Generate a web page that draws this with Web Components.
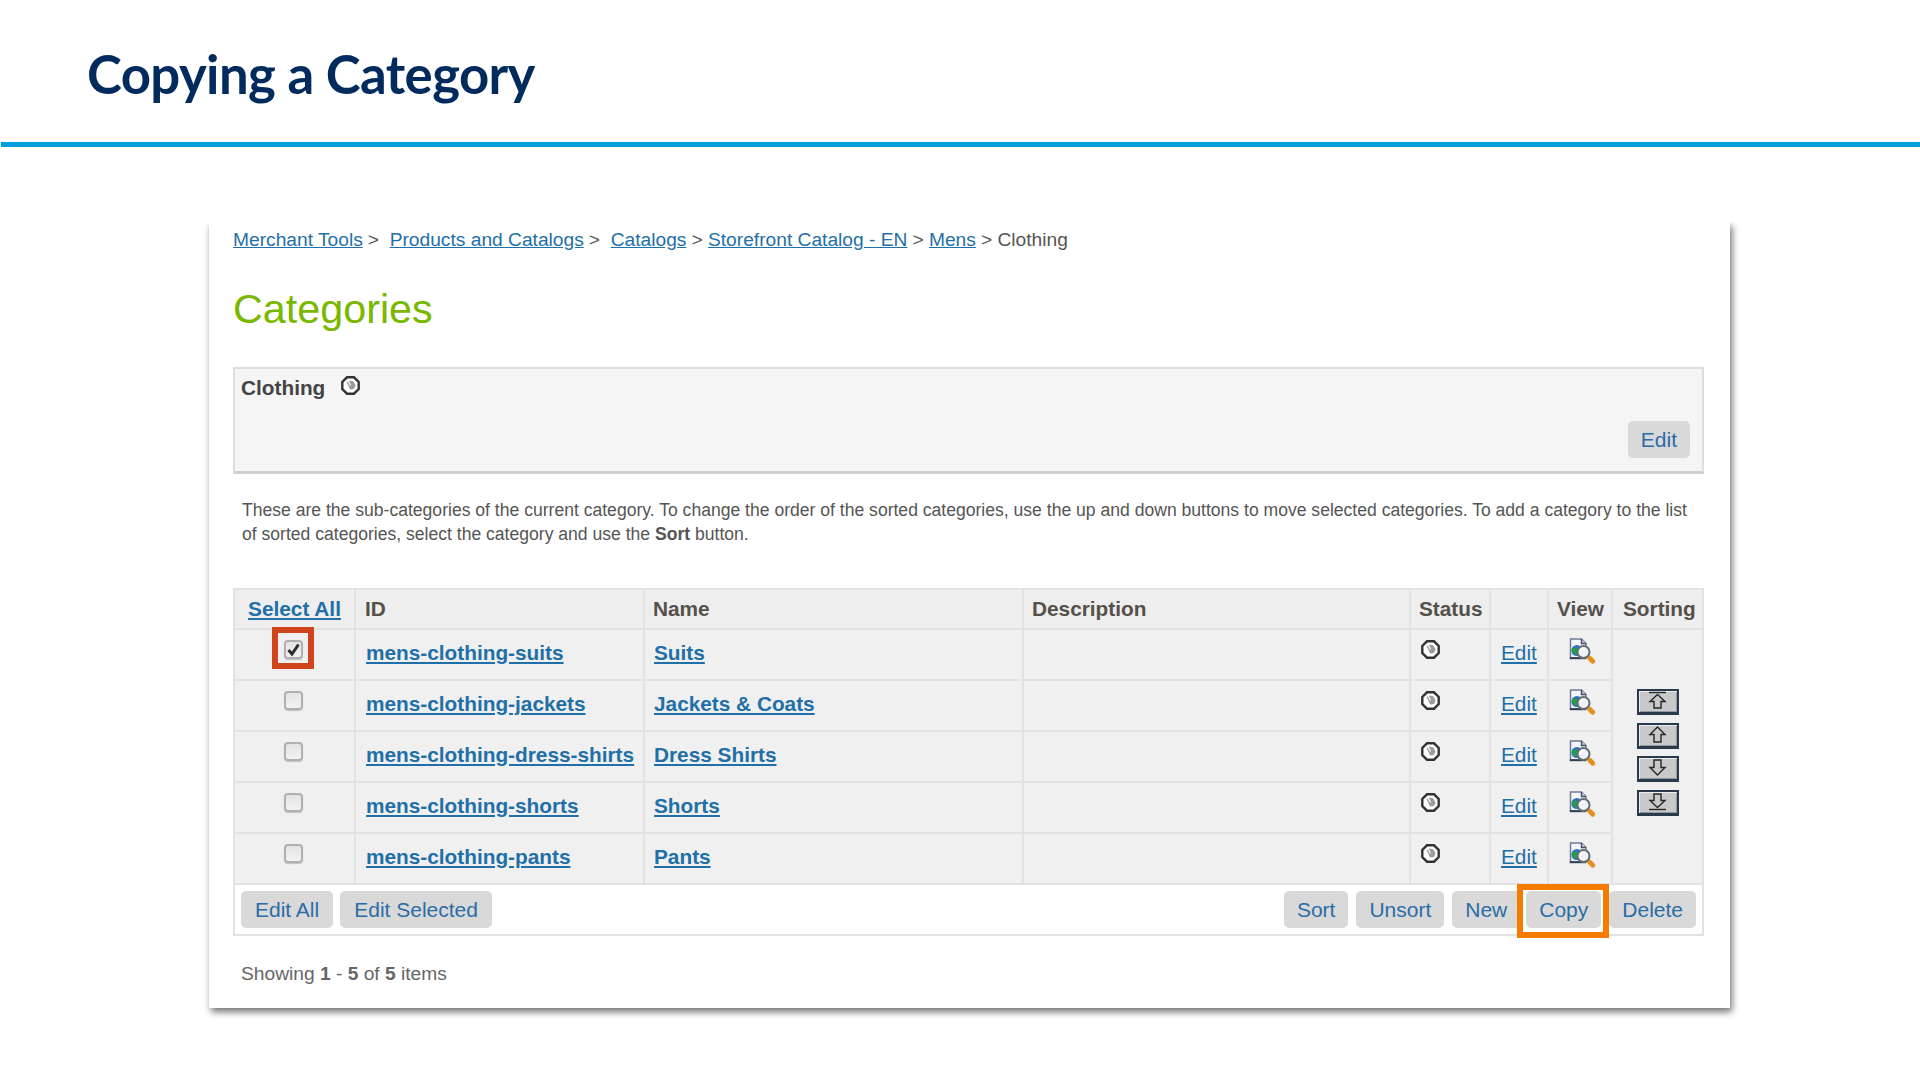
<!DOCTYPE html>
<html lang="en">
<head>
<meta charset="utf-8">
<title>Copying a Category</title>
<style>
    html, body { margin: 0; padding: 0; background: #fff; }
    body { width: 1920px; height: 1080px; overflow: hidden; font-family: "Liberation Sans", Arial, sans-serif; }
</style>
</head>
<body>
<slide-header>Copying a Category</slide-header>
<screen-card>
    <bread-crumbs>
        <a href="#">Merchant Tools</a><i>&gt;&nbsp;</i>
        <a href="#">Products and Catalogs</a><i>&gt;&nbsp;</i>
        <a href="#">Catalogs</a><i>&gt;</i>
        <a href="#">Storefront Catalog - EN</a><i>&gt;</i>
        <a href="#">Mens</a><i>&gt;</i>
        <span>Clothing</span>
    </bread-crumbs>
    <page-heading>Categories</page-heading>
    <category-box title="Clothing"></category-box>
    <help-text><span>These are the sub-categories of the current category. To change the order of the sorted categories, use the up and down buttons to move selected categories. To add a category to the list</span><br><span>of sorted categories, select the category and use the</span> <b>Sort</b> <span>button.</span></help-text>
    <category-table items='[
        {"id":"mens-clothing-suits","name":"Suits","checked":true},
        {"id":"mens-clothing-jackets","name":"Jackets &amp; Coats"},
        {"id":"mens-clothing-dress-shirts","name":"Dress Shirts"},
        {"id":"mens-clothing-shorts","name":"Shorts"},
        {"id":"mens-clothing-pants","name":"Pants"}
    ]'></category-table>
    <paging-info>Showing <b>1</b> - <b>5</b> of <b>5</b> items</paging-info>
</screen-card>

<script>
class SlideHeader extends HTMLElement {
    constructor() {
        super();
        this.attachShadow({ mode: 'open' });
        this.shadowRoot.innerHTML = `
            <style>
                :host {
                    display: flex;
                    align-items: center;
                    box-sizing: border-box;
                    height: 147px;
                    margin-left: 1px;
                    padding: 6px 0 0 86px;
                    border-bottom: 5px solid #00a0df;
                    font: bold 52.7px/1 Lato, "Open Sans", sans-serif;
                    color: #002b5c;
                    letter-spacing: -0.6px;
                }
            </style>
            <slot></slot>
        `;
    }
}

class ScreenCard extends HTMLElement {
    constructor() {
        super();
        this.attachShadow({ mode: 'open' });
        this.shadowRoot.innerHTML = `
            <style>
                :host {
                    display: block;
                    box-sizing: border-box;
                    width: 1521px;
                    height: 786px;
                    margin: 75px 0 0 209px;
                    padding: 6px 26px 0 24px;
                    background: #fff;
                    box-shadow: 2px 4px 7px rgba(0, 0, 0, .55);
                    clip-path: inset(0 -20px -20px -20px);
                    font-family: "Liberation Sans", Arial, sans-serif;
                    color: #555;
                }
            </style>
            <slot></slot>
        `;
    }
}

class BreadCrumbs extends HTMLElement {
    constructor() {
        super();
        this.attachShadow({ mode: 'open' });
        this.shadowRoot.innerHTML = `
            <style>
                :host {
                    display: block;
                    font-size: 19.2px;
                    line-height: 24px;
                    height: 24px;
                    white-space: nowrap;
                    color: #555;
                }
                ::slotted(a) { color: #1f6fa8; }
                ::slotted(i) { font-style: normal; margin-left: 5px; }
            </style>
            <slot></slot>
        `;
    }
}

class PageHeading extends HTMLElement {
    constructor() {
        super();
        this.attachShadow({ mode: 'open' });
        this.shadowRoot.innerHTML = `
            <style>
                :host {
                    display: block;
                    margin-top: 33px;
                    font-size: 41.3px;
                    line-height: 48px;
                    color: #7ab800;
                }
            </style>
            <slot></slot>
        `;
    }
}

class ActionButton extends HTMLElement {
    constructor() {
        super();
        this.attachShadow({ mode: 'open' });
        this.shadowRoot.innerHTML = `
            <style>
                :host {
                    display: inline-block;
                    box-sizing: border-box;
                    height: 37px;
                    padding: 0 13px;
                    border-radius: 5px;
                    background: #d9d9d9;
                    color: #2b6ca6;
                    font-size: 21px;
                    line-height: 37px;
                    white-space: nowrap;
                    cursor: pointer;
                }
            </style>
            <slot></slot>
        `;
    }
}

class StatusIcon extends HTMLElement {
    constructor() {
        super();
        this.attachShadow({ mode: 'open' });
        this.shadowRoot.innerHTML = `
            <style>
                :host { display: inline-block; width: 19px; height: 19px; line-height: 0; }
            </style>
            <svg width="19" height="19" viewBox="0 0 19 19">
                <polygon points="6,1.3 13,1.3 17.7,6 17.7,13 13,17.7 6,17.7 1.3,13 1.3,6" fill="#fff" stroke="#333" stroke-width="2.4"/>
                <path d="M5.5 6 9 4.5l3.5 1 2 4-1.5 3.5-4 .5-1.5-3.5z" fill="#9c9c9c"/>
                <path d="M7 4.5l2.5 5" stroke="#fff" stroke-width="1.2"/>
            </svg>
        `;
    }
}

class ViewIcon extends HTMLElement {
    constructor() {
        super();
        this.attachShadow({ mode: 'open' });
        this.shadowRoot.innerHTML = `
            <style>
                :host { display: inline-block; width: 27px; height: 27px; line-height: 0; }
            </style>
            <svg width="27" height="27" viewBox="0 0 27 27">
                <path d="M1.5 1H12.5l4.5 4.5V20H1.5z" fill="#f3f5f8" stroke="#6f7c94" stroke-width="1.5"/>
                <path d="M12.5 1v4.5H17" fill="#c9d0dc" stroke="#3f4f6a" stroke-width="1.4"/>
                <path d="M.8 20.2H17" stroke="#2d3f5a" stroke-width="2"/>
                <circle cx="8" cy="12.5" r="5.6" fill="#2f70c0"/>
                <path d="M3 10.5c2-1.8 5-1.2 5.6 1s-.5 3.200-1.100 5.300c-2.200-.2-5-3.300-4.500-6.300z" fill="#22a044"/>
                <circle cx="14.500" cy="14" r="6" fill="#eef2f6" stroke="#666c74" stroke-width="2"/>
                <path d="M11.500 13.500a3.200 3.200 0 0 1 3-2.800" stroke="#fff" stroke-width="1.600" fill="none"/>
                <path d="M18.800 18.300l1.600 1.600" stroke="#555" stroke-width="3"/>
                <path d="M20.800 20.300l2.900 2.900" stroke="#e39020" stroke-width="4.800" stroke-linecap="round"/>
            </svg>
        `;
    }
}

class SortButton extends HTMLElement {
    static get observedAttributes() {
        return ['dir'];
    }

    constructor() {
        super();
        this.attachShadow({ mode: 'open' });
    }

    connectedCallback() {
        const glyphs = {
            top: '<path d="M8 1.5H25" /><path d="M16.5 3.5 9 10.5H13v6.500h7v-6.500h4z" />',
            up: '<path d="M16.500 2 9 9.500H13v7.500h7V9.500h4z" />',
            down: '<path d="M16.500 17 9 9.500H13V2h7v7.500h4z" />',
            bottom: '<path d="M8 17.500H25" /><path d="M16.500 15.500 9 8.500H13V2h7v6.500h4z" />'
        };
        this.shadowRoot.innerHTML = `
            <style>
                :host {
                    display: block;
                    box-sizing: border-box;
                    width: 42px;
                    height: 26px;
                    border: 2px solid #2b3a4a;
                    border-bottom-width: 3px;
                    background: #c9c9c9;
                    box-shadow: inset 1px 1px 0 #e8eef4, inset -1px -1px 0 #8d99a8;
                    line-height: 0;
                }
                svg { display: block; margin: 0 0 0 2px; }
            </style>
            <svg width="32" height="20" viewBox="0 0 32 20" fill="none" stroke="#262626" stroke-width="1.400">
                ${glyphs[this.getAttribute('dir')]}
            </svg>
        `;
    }
}

class CategoryBox extends HTMLElement {
    constructor() {
        super();
        this.attachShadow({ mode: 'open' });
    }

    connectedCallback() {
        this.shadowRoot.innerHTML = `
            <style>
                :host {
                    display: flex;
                    flex-direction: column;
                    justify-content: space-between;
                    box-sizing: border-box;
                    height: 107px;
                    margin-top: 34px;
                    padding: 7px 12px 13px 6px;
                    background: #f5f5f5;
                    border: 2px solid #dedede;
                    border-bottom: 3px solid #cfcfcf;
                }
                .name {
                    display: flex;
                    align-items: flex-start;
                    gap: 16px;
                    font-size: 20.8px;
                    font-weight: bold;
                    line-height: 24px;
                    color: #444;
                }
                .actions { display: flex; justify-content: flex-end; }
            </style>
            <div class="name">${this.getAttribute('title')}<status-icon></status-icon></div>
            <div class="actions"><action-button>Edit</action-button></div>
        `;
    }
}

class HelpText extends HTMLElement {
    constructor() {
        super();
        this.attachShadow({ mode: 'open' });
        this.shadowRoot.innerHTML = `
            <style>
                :host {
                    display: block;
                    margin-top: 24px;
                    padding: 0 9px;
                    font-size: 17.57px;
                    line-height: 24px;
                    white-space: nowrap;
                    color: #555;
                }
            </style>
            <slot></slot>
        `;
    }
}

class CategoryTable extends HTMLElement {
    constructor() {
        super();
        this.attachShadow({ mode: 'open' });
    }

    connectedCallback() {
        const items = JSON.parse(this.getAttribute('items') || '[]');
        this.shadowRoot.innerHTML = `
            <style>
                :host {
                    display: block;
                    margin-top: 42px;
                    font-size: 20.8px;
                }
                table {
                    border-collapse: collapse;
                    table-layout: fixed;
                    width: 1469px;
                }
                th, td {
                    border: 2px solid #e2e2e2;
                    padding: 0 8px;
                    text-align: left;
                    background: #f0f0f0;
                }
                th {
                    height: 40px;
                    box-sizing: border-box;
                    background: #eeeeee;
                    color: #55504a;
                    font-size: 20.8px;
                }
                th.select a { color: #1f6fa8; }
                th.id-head { padding-left: 9px; }
                th.sort-head { padding: 0 0 0 10px; }
                tr.item td { height: 51px; box-sizing: border-box; padding: 0 8px 4px 8px; }
                tr.item td.id { padding-left: 10px; }
                tr.item td.name { padding-left: 9px; }
                tr.item td.edit { padding-left: 10px; }
                td a { color: #1f6fa8; }
                td a.strong { font-weight: bold; }
                td.check, td.icon { vertical-align: top; padding-top: 8px !important; text-align: center; line-height: 0; }
                td.check { padding-right: 10px !important; }
                td.status { vertical-align: top; padding-top: 10px !important; padding-left: 10px !important; line-height: 0; }
                td.icon { padding: 8px 5px 0 10px !important; }
                td.sorting { padding: 0 !important; vertical-align: middle; }
                .sort-stack {
                    display: flex;
                    flex-direction: column;
                    align-items: center;
                    gap: 7.5px;
                    margin-bottom: 8px;
                }
                .cb {
                    position: relative;
                    display: inline-block;
                    box-sizing: border-box;
                    width: 19px;
                    height: 19px;
                    margin-top: 2px;
                    border: 2px solid #b0b0b0;
                    border-radius: 4px;
                    background: linear-gradient(#e4e4e4, #f2f2f2);
                    box-shadow: 0 1px 1px rgba(0, 0, 0, .2);
                }
                .cb svg { position: absolute; left: 0; top: 0; }
                .cb.marked::after {
                    content: '';
                    position: absolute;
                    left: -14px;
                    top: -15px;
                    width: 30px;
                    height: 30px;
                    border: 6px solid #d0441b;
                }
                td.footer {
                    height: 51px;
                    box-sizing: border-box;
                    padding: 0 6px;
                    background: #fff;
                }
                .bar { display: flex; align-items: center; justify-content: space-between; height: 100%; }
                .bar > div { display: flex; gap: 8px; }
                .left { gap: 7px !important; }
                .left action-button { padding: 0 14px; }
                .copy { position: relative; margin-left: -2px; }
                .copy::after {
                    content: '';
                    position: absolute;
                    left: -9px;
                    top: -7px;
                    width: 80px;
                    height: 42px;
                    border: 6px solid #f57c00;
                }
            </style>
            <table>
                <colgroup>
                    <col style="width:121px"><col style="width:289px"><col style="width:379px"><col style="width:387px">
                    <col style="width:80px"><col style="width:58px"><col style="width:64px"><col style="width:91px">
                </colgroup>
                <thead>
                    <tr>
                        <th class="select" style="text-align:center"><a href="#">Select All</a></th>
                        <th class="id-head">ID</th><th>Name</th><th>Description</th><th>Status</th><th></th><th>View</th><th class="sort-head">Sorting</th>
                    </tr>
                </thead>
                <tbody>
                    ${items.map((item, index) => `
                        <tr class="item">
                            <td class="check">
                                <span class="cb ${item.checked ? 'marked' : ''}">
                                    ${item.checked ? '<svg width="15" height="15" viewBox="0 0 15 15"><path d="M2.500 8 6 12l6.500-9.500" fill="none" stroke="#2c2c2c" stroke-width="3"/></svg>' : ''}
                                </span>
                            </td>
                            <td class="id"><a class="strong" href="#">${item.id}</a></td>
                            <td class="name"><a class="strong" href="#">${item.name}</a></td>
                            <td></td>
                            <td class="status"><status-icon></status-icon></td>
                            <td class="edit"><a href="#">Edit</a></td>
                            <td class="icon"><view-icon></view-icon></td>
                            ${index === 0 ? `
                                <td class="sorting" rowspan="${items.length}">
                                    <div class="sort-stack">
                                        <sort-button dir="top"></sort-button>
                                        <sort-button dir="up"></sort-button>
                                        <sort-button dir="down"></sort-button>
                                        <sort-button dir="bottom"></sort-button>
                                    </div>
                                </td>
                            ` : ''}
                        </tr>
                    `).join('')}
                    <tr>
                        <td class="footer" colspan="8">
                            <div class="bar">
                                <div class="left">
                                    <action-button>Edit All</action-button>
                                    <action-button>Edit Selected</action-button>
                                </div>
                                <div>
                                    <action-button>Sort</action-button>
                                    <action-button>Unsort</action-button>
                                    <action-button>New</action-button>
                                    <action-button class="copy">Copy</action-button>
                                    <action-button>Delete</action-button>
                                </div>
                            </div>
                        </td>
                    </tr>
                </tbody>
            </table>
        `;
    }
}

class PagingInfo extends HTMLElement {
    constructor() {
        super();
        this.attachShadow({ mode: 'open' });
        this.shadowRoot.innerHTML = `
            <style>
                :host {
                    display: block;
                    margin-top: 26px;
                    padding-left: 8px;
                    font-size: 19.2px;
                    line-height: 24px;
                    color: #666;
                }
            </style>
            <slot></slot>
        `;
    }
}

customElements.define('slide-header', SlideHeader);
customElements.define('screen-card', ScreenCard);
customElements.define('bread-crumbs', BreadCrumbs);
customElements.define('page-heading', PageHeading);
customElements.define('action-button', ActionButton);
customElements.define('status-icon', StatusIcon);
customElements.define('view-icon', ViewIcon);
customElements.define('sort-button', SortButton);
customElements.define('category-box', CategoryBox);
customElements.define('help-text', HelpText);
customElements.define('category-table', CategoryTable);
customElements.define('paging-info', PagingInfo);
</script>
</body>
</html>
